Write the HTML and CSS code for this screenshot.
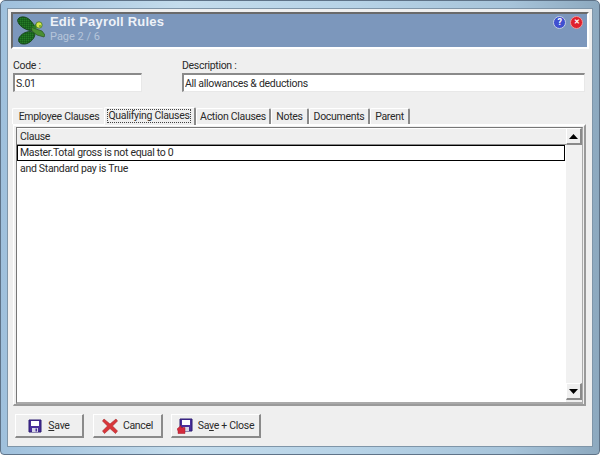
FILE: index.html
```
<!DOCTYPE html>
<html lang="en">
<head>
<meta charset="utf-8">
<title>Edit Payroll Rules</title>
<link rel="stylesheet" href="styles.css">
</head>
<body>
<div class="window">
  <div class="client">
    <header class="banner">
      <svg class="logo" width="30" height="30" viewBox="0 0 30 30">
        <defs>
          <pattern id="weave" width="2" height="2" patternUnits="userSpaceOnUse">
            <rect width="2" height="2" fill="#1a6a1e"/>
            <rect width="1" height="1" fill="#16591a"/>
            <rect x="1" y="1" width="1" height="1" fill="#267a28"/>
          </pattern>
        </defs>
        <path d="M3 4 C5 1 11 1 15 5 C19 9 21 13 20 15 C14 17 7 13 4 9 C3 7 2 6 3 4Z" fill="url(#weave)" stroke="#123a14" stroke-width=".8"/>
        <path d="M4 27 C2 23 7 18 12 17 C16 16 20 17 20 19 C20 24 13 30 8 29 C6 29 5 28 4 27Z" fill="url(#weave)" stroke="#0f3a12" stroke-width=".8"/>
        <path d="M16 12 L21 14 L27 16 L30 20 L29 22 L22 20 L17 16Z" fill="#4a8f32" stroke="#2a5220" stroke-width=".7"/>
        <path d="M17 12 L22 8 L23 13 L20 14Z" fill="#2f7d28"/>
        <circle cx="24" cy="10" r="3.2" fill="#d8e64a" stroke="#39702a" stroke-width=".8"/>
        <circle cx="25" cy="11" r="1.1" fill="#6aa83a"/>
      </svg>
      <div class="banner-text">
        <div class="banner-title">Edit Payroll Rules</div>
        <div class="banner-sub">Page 2 / 6</div>
      </div>
      <div class="banner-icons">
        <span class="round help">?</span>
        <span class="round close">✕</span>
      </div>
    </header>

    <div class="fields">
      <label class="field field-code"><span>Code :</span><input class="inset" value="S.01"></label>
      <label class="field field-desc"><span>Description :</span><input class="inset" value="All allowances &amp; deductions"></label>
    </div>

    <div class="tabs">
      <div class="tab tab-emp">Employee Clauses</div>
      <div class="tab active"><span class="focus">Qualifying Clauses</span></div>
      <div class="tab tab-act">Action Clauses</div>
      <div class="tab tab-notes">Notes</div>
      <div class="tab tab-docs">Documents</div>
      <div class="tab tab-par">Parent</div>
    </div>

    <section class="panel">
      <div class="grid">
        <div class="grid-main">
          <div class="grid-head">Clause</div>
          <div class="grid-row selected">Master.Total gross is not equal to 0</div>
          <div class="grid-row">and Standard pay is True</div>
        </div>
        <div class="scrollbar">
          <div class="sb-btn"><svg width="9" height="5" viewBox="0 0 9 5"><path d="M4.5 0 L9 5 H0Z" fill="#000"/></svg></div>
          <div class="sb-track"></div>
          <div class="sb-btn"><svg width="9" height="5" viewBox="0 0 9 5"><path d="M0 0 H9 L4.5 5Z" fill="#000"/></svg></div>
        </div>
      </div>
    </section>

    <footer class="actions">
      <button class="btn btn-save">
        <svg width="14" height="14" viewBox="0 0 14 14"><path d="M1 1 H13 V13 H1Z" fill="#4a2f9c" stroke="#2a1a70"/><path d="M3 2 H11 V7 H3Z" fill="#fff"/><path d="M4 9 H10 V13 H4Z" fill="#d6d6e6"/><path d="M7.500 9.500 H9 V12.500 H7.500Z" fill="#4a2f9c"/></svg>
        <span><u>S</u>ave</span>
      </button>
      <button class="btn btn-cancel">
        <svg width="16" height="16" viewBox="0 0 16 16"><path d="M2 1 L8 6 L14 1 L15.500 3 L10.500 8 L15.500 13 L13.500 15.500 L8 10.500 L2.500 15.500 L.5 13 L5.500 8 L.5 3Z" fill="#d9363a" stroke="#a82a2e" stroke-width=".6"/></svg>
        <span>Cancel</span>
      </button>
      <button class="btn btn-close">
        <svg width="16" height="16" viewBox="0 0 16 16"><path d="M3 1 H15 V13 H3Z" fill="#4a2f9c" stroke="#2a1a70"/><path d="M5 2 H13 V7 H5Z" fill="#fff"/><path d="M6 9 H12 V13 H6Z" fill="#d6d6e6"/><path d="M0 11 L4 7.500 V9.500 H8 V15.500 H1 V13Z" fill="#d42a3c" stroke="#a01c2c" stroke-width=".5"/></svg>
        <span>Sa<u>v</u>e + Close</span>
      </button>
    </footer>
  </div>
</div>
</body>
</html>
```
FILE: styles.css
```
* { box-sizing: border-box; }
html, body { margin: 0; padding: 0; }
body {
  width: 600px;
  height: 455px;
  overflow: hidden;
  font-family: Roboto, "Liberation Sans", Arial, sans-serif;
  font-size: 10.5px;
  letter-spacing: -.3px;
  color: #2a2a2a;
  background: #fff;
}
.window {
  width: 600px;
  height: 455px;
  padding: 8px 7px 6px 7px;
  border: 1px solid #5f7388;
  border-radius: 5px 5px 4px 4px;
  background: linear-gradient(90deg, #9fc0dc 0%, #c4dcec 30%, #b6d2e6 60%, #a7c4da 85%, #8da9bf 100%);
}
.client {
  height: 100%;
  margin: -1px;
  background: #efefef;
  border: 1px solid #7f95a8;
  display: flex;
  flex-direction: column;
  padding: 3px 4px 0 4px;
}

.banner {
  height: 37px;
  margin: 0 -1px 0 -1px;
  flex: none;
  display: flex;
  background: #7c97bc;
  border-top: 2px solid #6a6a6a;
  border-left: 2px solid #6a6a6a;
  border-right: 2px solid #fff;
  border-bottom: 2px solid #fff;
  padding: 1px 4px 0 2px;
  align-items: flex-start;
}
.logo { flex: none; margin-right: 5px; }
.banner-text { flex: 1; }
.banner-title { font-family: "Liberation Sans", Arial, sans-serif; font-size: 13px; font-weight: bold; color: #eef2f8; line-height: 14px; letter-spacing: .2px; }
.banner-sub { font-size: 11px; letter-spacing: 0; color: #b6c5da; line-height: 15px; }
.banner-icons { display: flex; gap: 4px; padding-top: 1px; }
.round {
  width: 13px;
  height: 13px;
  border-radius: 50%;
  display: flex;
  align-items: center;
  justify-content: center;
  color: #fff;
  font-weight: bold;
  font-size: 9px;
  line-height: 13px;
  border: 1px solid #c4cfe4;
}
.help { background: #3f4fd0; }
.close { background: #e0202c; border-color: #e99; font-size: 7px; }

.fields {
  flex: none;
  display: flex;
  gap: 40px;
  padding: 9px 1px 0 1px;
  height: 60px;
}
.field { display: flex; flex-direction: column; color: #2a2a2a; }
.field span { line-height: 15px; height: 15px; }
.field-code { width: 129px; }
.field-desc { width: 403px; }
.inset {
  width: 100%;
  height: 19px;
  margin: 0;
  padding: 0 1px;
  font: inherit;
  letter-spacing: inherit;
  color: #2a2a2a;
  background: #fff;
  border-top: 2px solid #8a8a8a;
  border-left: 2px solid #8a8a8a;
  border-right: 1px solid #e8e8e8;
  border-bottom: 1px solid #e8e8e8;
  border-radius: 0;
  outline: none;
}

.tabs {
  flex: none;
  display: flex;
  align-items: flex-end;
  height: 17px;
  margin-top: -2px;
}
.tab {
  height: 16px;
  line-height: 16px;
  text-align: center;
  border-top: 1px solid #fff;
  border-left: 1px solid #fff;
  border-right: 2px solid #8a8a8a;
  border-radius: 2px 2px 0 0;
  white-space: nowrap;
  flex: none;
}
.tab-emp { width: 92px; border-right-color: transparent; padding-left: 3px; }
.tab-act { width: 75px; }
.tab-notes { width: 38px; }
.tab-docs { width: 61px; }
.tab-par { width: 40px; }
.tab.active {
  width: 92px;
  height: 18px;
  margin-bottom: -1px;
  position: relative;
  padding: 1px 3px 0 2px;
  background: #efefef;
}
.focus { display: block; border: 1px dotted #444; line-height: 12px; height: 14px; }

.panel {
  flex: none;
  height: 282px;
  margin: 0 2px 0 1px;
  border-top: 2px solid #fff;
  border-left: 1px solid #fff;
  border-right: 2px solid #9a9a9a;
  border-bottom: 2px solid #9a9a9a;
  padding: 1px 1px 0 2px;
}
.grid {
  height: 277px;
  display: flex;
  border-top: 1px solid #777;
  border-left: 1px solid #777;
  border-bottom: 2px solid #aaa;
  border-right: 1px solid #aaa;
  background: #efefef;
}
.grid-main { flex: 1; background: #fff; }
.grid-head {
  height: 17px;
  line-height: 16px;
  background: #efefef;
  padding-left: 3px;
  border-bottom: 1px solid #8a8a8a;
  border-top: 1px solid #fff;
}
.grid-row { height: 16px; line-height: 15px; padding-left: 3px; margin-right: 1px; }
.grid-row.selected { border: 1px solid #000; padding-left: 2px; line-height: 14px; }
.scrollbar { flex: none; width: 16px; display: flex; flex-direction: column; height: 272px; }
.sb-btn {
  flex: none;
  height: 17px;
  display: flex;
  align-items: center;
  justify-content: center;
  background: #efefef;
  border-top: 1px solid #fff;
  border-left: 1px solid #fff;
  border-right: 2px solid #8a8a8a;
  border-bottom: 2px solid #8a8a8a;
}
.sb-track { flex: 1; background: #f1f1f1; }

.actions {
  flex: none;
  display: flex;
  padding: 8px 0 0 3px;
}
.btn {
  height: 24px;
  margin: 0;
  padding: 0;
  display: flex;
  align-items: center;
  justify-content: center;
  gap: 5px;
  font: inherit;
  letter-spacing: inherit;
  color: #2a2a2a;
  background: #efefef;
  border-top: 1px solid #fff;
  border-left: 1px solid #fff;
  border-right: 2px solid #8a8a8a;
  border-bottom: 2px solid #8a8a8a;
  border-radius: 0;
  flex: none;
}
.btn-save { width: 69px; gap: 6px; margin-right: 9px; }
.btn-cancel { width: 70px; margin-right: 8px; }
.btn-close { width: 90px; }
```
